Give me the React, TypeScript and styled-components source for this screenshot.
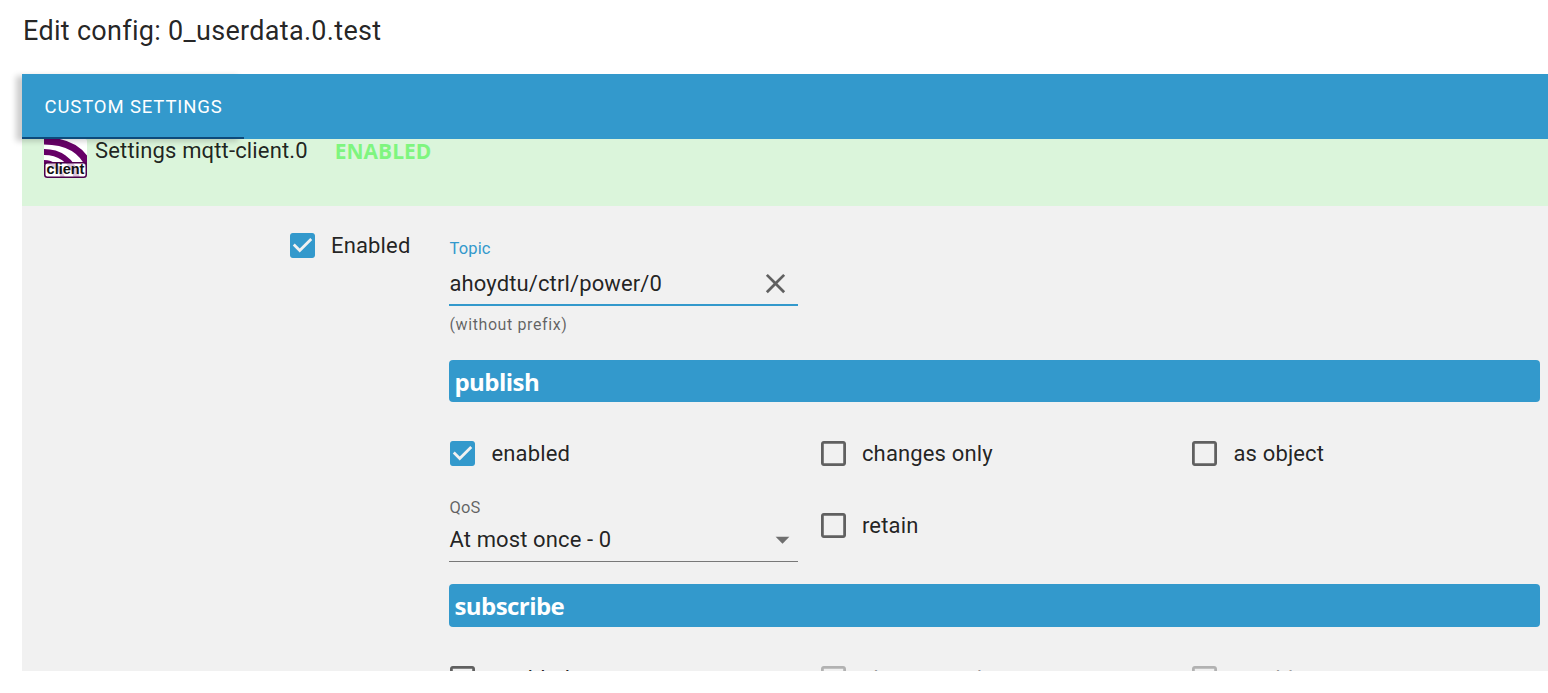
import styled, { createGlobalStyle } from "styled-components";

const BLUE = "#3399cc";

const GlobalStyle = createGlobalStyle`
  html, body {
    margin: 0;
    padding: 0;
    background: #fff;
    overflow: hidden;
  }
  body {
    font-family: Roboto, "Liberation Sans", sans-serif;
    color: rgba(0, 0, 0, 0.87);
  }
`;

const Page = styled.div`
  height: 671px;
  overflow: hidden;
  padding-left: 22px;
`;

const Title = styled.h1`
  margin: 0;
  height: 74px;
  padding-top: 13px;
  box-sizing: border-box;
  padding-left: 1px;
  font-size: 27px;
  line-height: 36px;
  font-weight: 400;
  letter-spacing: 0.3px;
`;

const TabBar = styled.div`
  height: 65px;
  background: ${BLUE};
  display: flex;
  position: relative;
  z-index: 1;
`;

const Tab = styled.div`
  width: 222px;
  box-sizing: border-box;
  padding: 2px 10px 0 22.5px;
  display: flex;
  align-items: center;
  color: #fff;
  font-size: 18.5px;
  font-weight: 400;
  letter-spacing: 0.88px;
  text-transform: uppercase;
  border-bottom: 2px solid #0d4a7a;
  box-shadow: -6px 2px 6px rgba(0, 0, 0, 0.2);
  background: ${BLUE};
`;

const Banner = styled.div`
  height: 67px;
  background: #dbf5db;
  padding-left: 22px;
  display: flex;
  align-items: flex-start;
`;

const AdapterIcon = styled.svg`
  width: 43px;
  height: 39px;
  display: block;
`;

const BannerTitle = styled.span`
  margin-left: 8px;
  font-size: 22px;
  line-height: 24px;
  letter-spacing: 0.15px;
`;

const Status = styled.span`
  margin-left: 27px;
  font-family: "Open Sans", sans-serif;
  font-size: 21px;
  line-height: 24px;
  font-weight: 700;
  color: #7ff57f;
`;

const Body = styled.div`
  background: #f1f1f1;
  display: flex;
  padding: 27px 8px 40px 268px;
  align-items: flex-start;
  border-bottom-left-radius: 3px;
`;

const Field = styled.label<{ $muted?: boolean; $offset?: number }>`
  display: flex;
  align-items: center;
  gap: 16px;
  font-size: 22px;
  line-height: 25px;
  letter-spacing: 0.15px;
  white-space: nowrap;
  margin-top: ${(p) => p.$offset ?? 0}px;
  color: ${(p) => (p.$muted ? "rgba(0, 0, 0, 0.38)" : "rgba(0, 0, 0, 0.87)")};
`;

const Form = styled.div`
  margin-left: 39px;
  padding-top: 7px;
  flex: 1;
  min-width: 0;
`;

const InputBox = styled.div`
  width: 349px;
`;

const SmallLabel = styled.div<{ $focused?: boolean }>`
  font-size: 16.5px;
  line-height: 18px;
  letter-spacing: 0.15px;
  color: ${(p) => (p.$focused ? BLUE : "rgba(0, 0, 0, 0.6)")};
`;

const InputRow = styled.div<{ $focused?: boolean }>`
  display: flex;
  align-items: center;
  justify-content: space-between;
  margin-top: 4px;
  height: 44px;
  box-sizing: border-box;
  padding: 0 6px 0 0;
  font-size: 22px;
  letter-spacing: 0.12px;
  border-bottom: ${(p) =>
    p.$focused ? `2px solid ${BLUE}` : "1px solid rgba(0, 0, 0, 0.5)"};
`;

const Helper = styled.div`
  margin-top: 9px;
  font-size: 16px;
  line-height: 20px;
  letter-spacing: 0.6px;
  color: rgba(0, 0, 0, 0.6);
`;

const SectionBar = styled.div<{ $top: number; $height: number }>`
  margin-top: ${(p) => p.$top}px;
  height: ${(p) => p.$height}px;
  background: ${BLUE};
  border-radius: 4px;
  padding-left: 5px;
  display: flex;
  align-items: center;
  color: #fff;
  font-family: "Open Sans", sans-serif;
  font-size: 24px;
  letter-spacing: -0.55px;
  font-weight: 700;
`;

const Columns = styled.div`
  display: grid;
  grid-template-columns: repeat(3, 371.5px);
  margin-top: 39px;
  align-items: start;
  row-gap: 32px;
`;

const FirstColumnField = styled.div`
  padding-left: 1px;
`;

const SelectBox = styled.div`
  width: 349px;
  padding-top: 1px;
`;

const SelectRow = styled(InputRow)`
  height: 42px;
  margin-top: 3px;
  padding-right: 0;
  padding-bottom: 3px;
`;

const BoxIcon = styled.svg<{ $tone: string }>`
  width: 25px;
  height: 25px;
  flex: none;
  fill: ${(p) => p.$tone};
`;

const Clear = styled.svg`
  width: 33px;
  height: 33px;
  fill: rgba(0, 0, 0, 0.6);
`;

const Arrow = styled.svg`
  width: 33px;
  height: 33px;
  fill: rgba(0, 0, 0, 0.54);
  margin-right: -1px;
`;

type CheckProps = { checked?: boolean; disabled?: boolean };

const Check = ({ checked, disabled }: CheckProps) => (
  <BoxIcon
    viewBox="3 3 18 18"
    $tone={checked ? BLUE : disabled ? "rgba(0,0,0,0.26)" : "rgba(0,0,0,0.6)"}
  >
    {checked ? (
      <path d="M19 3H5c-1.11 0-2 .9-2 2v14c0 1.1.89 2 2 2h14c1.11 0 2-.9 2-2V5c0-1.1-.89-2-2-2zm-9 14l-5-5 1.41-1.41L10 14.17l7.59-7.59L19 8l-9 9z" />
    ) : (
      <path d="M19 5v14H5V5h14m0-2H5c-1.1 0-2 .9-2 2v14c0 1.1.9 2 2 2h14c1.1 0 2-.9 2-2V5c0-1.1-.9-2-2-2z" />
    )}
  </BoxIcon>
);

const ClientLogo = () => (
  <AdapterIcon viewBox="0 0 43 39">
    <rect width="43" height="39" rx="2" fill="#fff" />
    <g fill="none" stroke="#660066">
      <path d="M0 2C20 2 38 9 46 29" strokeWidth="7" />
      <path d="M0 13C14 13 28 20 33 39" strokeWidth="6" />
      <path d="M0 23C8 23 16 28 19 39" strokeWidth="4" />
    </g>
    <rect
      x="0.75"
      y="23.75"
      width="41.5"
      height="14.5"
      rx="2.5"
      fill="rgba(255,255,255,0.78)"
      stroke="#4d004d"
      strokeWidth="1.5"
    />
    <text
      x="21.5"
      y="35"
      textAnchor="middle"
      fontFamily="'Liberation Sans', sans-serif"
      fontWeight="700"
      fontSize="14.5"
      fill="#111"
    >
      client
    </text>
  </AdapterIcon>
);

export default function App() {
  return (
    <>
      <GlobalStyle />
      <Page>
        <Title>Edit config: 0_userdata.0.test</Title>
        <TabBar>
          <Tab>Custom settings</Tab>
        </TabBar>
        <Banner>
          <ClientLogo />
          <BannerTitle>Settings mqtt-client.0</BannerTitle>
          <Status>ENABLED</Status>
        </Banner>
        <Body>
          <Field>
            <Check checked />
            Enabled
          </Field>
          <Form>
            <InputBox>
              <SmallLabel $focused>Topic</SmallLabel>
              <InputRow $focused>
                ahoydtu/ctrl/power/0
                <Clear viewBox="0 0 24 24">
                  <path d="M19 6.41 17.59 5 12 10.59 6.41 5 5 6.41 10.59 12 5 17.59 6.41 19 12 13.41 17.59 19 19 17.59 13.41 12z" />
                </Clear>
              </InputRow>
              <Helper>(without prefix)</Helper>
            </InputBox>
            <SectionBar $top={25} $height={42}>publish</SectionBar>
            <Columns>
              <FirstColumnField>
                <Field>
                  <Check checked />
                  enabled
                </Field>
              </FirstColumnField>
              <Field>
                <Check />
                changes only
              </Field>
              <Field>
                <Check />
                as object
              </Field>
              <SelectBox>
                <SmallLabel>QoS</SmallLabel>
                <SelectRow>
                  At most once - 0
                  <Arrow viewBox="0 0 24 24">
                    <path d="M7 10l5 5 5-5z" />
                  </Arrow>
                </SelectRow>
              </SelectBox>
              <Field $offset={15}>
                <Check />
                retain
              </Field>
            </Columns>
            <SectionBar $top={22} $height={43}>subscribe</SectionBar>
            <Columns>
              <FirstColumnField>
                <Field>
                  <Check />
                  enabled
                </Field>
              </FirstColumnField>
              <Field $muted>
                <Check disabled />
                changes only
              </Field>
              <Field $muted>
                <Check disabled />
                as object
              </Field>
            </Columns>
          </Form>
        </Body>
      </Page>
    </>
  );
}
